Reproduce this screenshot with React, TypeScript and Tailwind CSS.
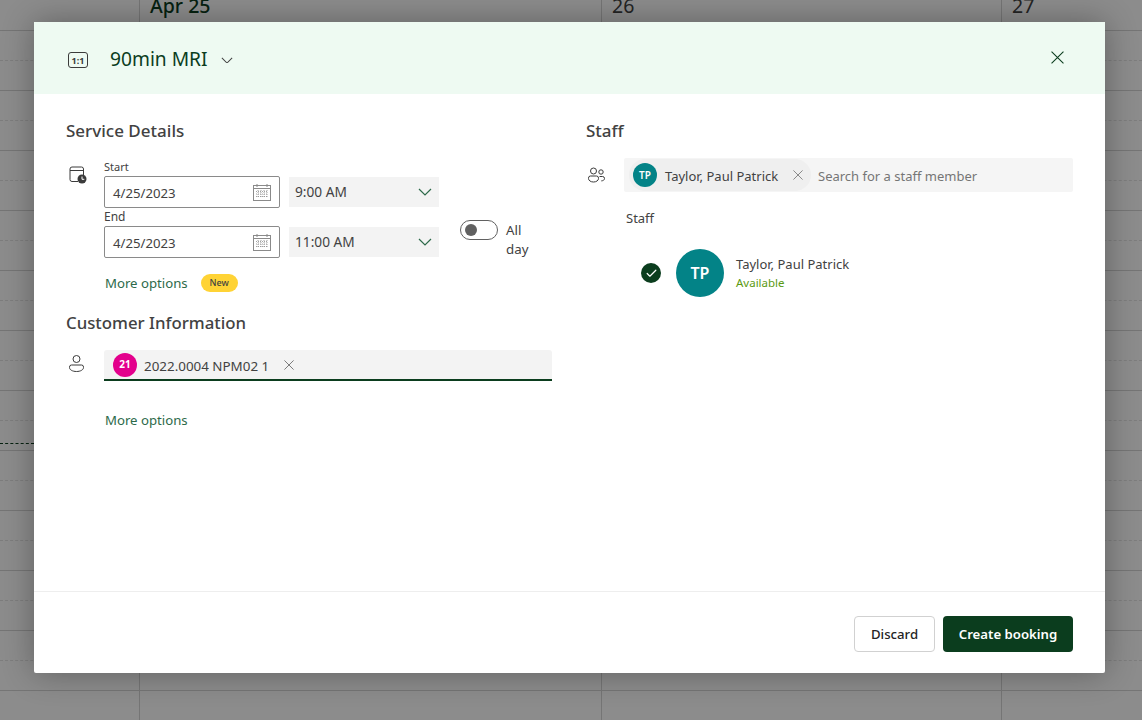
import { Check } from "lucide-react";

const font = "font-['Noto_Sans',sans-serif]";

function Dismiss({ size = 12, className = "" }: { size?: number; className?: string }) {
  return (
    <svg width={size} height={size} viewBox="0 0 12 12" fill="none" stroke="currentColor" strokeWidth="1" className={className}>
      <path d="M0.5 0.5 11.5 11.5M11.5 0.5 0.5 11.5" />
    </svg>
  );
}

function Chevron({ width = 14, className = "" }: { width?: number; className?: string }) {
  return (
    <svg width={width} height={(width * 8) / 14} viewBox="0 0 14 8" fill="none" stroke="currentColor" strokeWidth="1.2" className={className}>
      <path d="M1 1 7 7 13 1" />
    </svg>
  );
}

function CalendarIcon() {
  return (
    <svg width="18" height="17" viewBox="0 0 18 17" fill="none" stroke="#8a8a8a" strokeWidth="1">
      <rect x="0.5" y="1.5" width="17" height="15" />
      <path d="M0.5 4.5h17M4 0v3M14 0v3" />
      <path d="M3 7.5h12M3 10h12M3 12.5h12M5 6v8M8 6v8M11 6v8M14 6v8" strokeWidth="0.8" strokeDasharray="1 1" />
    </svg>
  );
}

function CalendarClock() {
  return (
    <svg width="18" height="18" viewBox="0 0 18 18" fill="none" className="text-[#3b3b3b]">
      <path d="M9 15.5H3a2 2 0 0 1-2-2V3a2 2 0 0 1 2-2h9.5a2 2 0 0 1 2 2v6" stroke="currentColor" strokeWidth="1" />
      <path d="M1 4.500h13.500" stroke="currentColor" strokeWidth="1" />
      <circle cx="13" cy="13" r="4.500" fill="currentColor" />
      <path d="M13 10.500V13.300H15.300" stroke="#fff" strokeWidth="1" />
    </svg>
  );
}

function PeopleIcon() {
  return (
    <svg width="17" height="16" viewBox="0 0 17 16" fill="none" stroke="#3b3b3b" strokeWidth="1">
      <circle cx="5.500" cy="4" r="3" />
      <circle cx="13" cy="5" r="2.200" />
      <path d="M2.500 9h6a2 2 0 0 1 2 2v.5c0 2-2.200 3.500-5 3.500s-5-1.500-5-3.500V11a2 2 0 0 1 2-2Z" />
      <path d="M11.500 9.500h3a2 2 0 0 1 2 2c0 1.400-1.300 2.300-3.200 2.400" />
    </svg>
  );
}

function PersonIcon() {
  return (
    <svg width="15" height="17" viewBox="0 0 15 17" fill="none" stroke="#3b3b3b" strokeWidth="1">
      <circle cx="7.500" cy="4" r="3.500" />
      <path d="M2.500 10h10a2 2 0 0 1 2 2v.5c0 2.300-3 4-7 4s-7-1.700-7-4V12a2 2 0 0 1 2-2Z" />
    </svg>
  );
}

function DateField({ value }: { value: string }) {
  return (
    <div className="w-[176px] h-8 border border-[#8a8a8a] rounded-[2px] flex items-center justify-between pl-2 pr-[8px] text-[13.2px] text-[#424242]">
      <span className="mt-[3px]">{value}</span>
      <CalendarIcon />
    </div>
  );
}

function TimeField({ value }: { value: string }) {
  return (
    <div className="w-[150px] h-[30px] ml-[9px] bg-[#f3f3f3] flex items-center justify-between pl-[6px] pr-[7px] text-[13.7px] text-[#424242]">
      <span>{value}</span>
      <Chevron className="text-[#2d6a4a]" />
    </div>
  );
}

function Row({ solid }: { solid: boolean }) {
  return <div className={solid ? "h-[30px] border-b border-[#d6d6d6]" : "h-[30px] border-b border-dashed border-[#e4e4e4]"} />;
}

export default function App() {
  const rows = Array.from({ length: 23 }, (_, i) => i);
  return (
    <div className={`${font} relative w-[1142px] h-[720px] overflow-hidden bg-white`}>
      {/* calendar behind the dialog */}
      <div className="grid grid-cols-[140px_462px_400px_140px] h-full">
        {["", "Apr 25", "26", "27"].map((day, c) => (
          <div key={c} className={c < 3 ? "border-r border-[#d6d6d6]" : ""}>
            <div className="h-[37px] -mt-[6px] border-b border-[#d6d6d6] pl-[10px] text-[19.5px] leading-[24px]">
              <span className={c === 1 ? "text-[#0b3d1e] font-medium" : "text-[#424242]"}>{day}</span>
            </div>
            {rows.map((r) => (
              <Row key={r} solid={r % 2 === 1} />
            ))}
          </div>
        ))}
      </div>
      <div className="absolute left-0 top-[443px] w-[34px] border-t border-dashed border-[#0b3d1e]" />

      {/* dim layer */}
      <div className="absolute inset-0 bg-black/45" />

      {/* dialog */}
      <div className="absolute left-[34px] top-[22px] w-[1071px] h-[651px] bg-white rounded-[2px] shadow-[0_0_32px_rgba(0,0,0,0.32)] flex flex-col">
        <header className="h-[72px] shrink-0 bg-[#eefaf2] flex items-center pl-[34px] pr-[41px]">
          <div className="mt-[4px] w-5 h-4 border border-[#3b3b3b] rounded-[3px] flex items-center justify-center text-[9px] font-bold leading-none text-[#3b3b3b]">1:1</div>
          <h1 className="ml-[22px] mt-[2px] text-[19.2px] leading-7 text-[#0b3d1e]">90min MRI</h1>
          <Chevron width={12} className="ml-[13px] mt-[4px] text-[#424242]" />
          <Dismiss size={13} className="ml-auto -mt-[1px] text-[#0b3d1e]" />
        </header>

        <div className="flex-1 flex px-8 gap-[34px] pt-6">
          <section className="w-[486px]">
            <h2 className="h-6 text-[17px] leading-[26px] font-medium text-[#424242]">Service Details</h2>
            <div className="flex mt-[16px]">
              <div className="w-[38px] pt-[8px] pl-[3px]">
                <CalendarClock />
              </div>
              <div>
                <div className="text-[11px] leading-4 mt-[1px] mb-[1px] text-[#424242]">Start</div>
                <div className="flex items-center">
                  <DateField value="4/25/2023" />
                  <TimeField value="9:00 AM" />
                </div>
                <div className="text-[12px] leading-[18px] text-[#424242]">End</div>
                <div className="flex items-center">
                  <DateField value="4/25/2023" />
                  <TimeField value="11:00 AM" />
                </div>
              </div>
              <div className="flex items-start ml-[21px] mt-[62px]">
                <div className="w-[38px] h-5 rounded-full border border-[#616161] flex items-center pl-[4px]">
                  <div className="w-[12px] h-[12px] rounded-full bg-[#616161]" />
                </div>
                <div className="ml-2 w-6 mt-[1px] text-[13.3px] leading-[19px] text-[#424242]">All day</div>
              </div>
            </div>
            <div className="flex items-center ml-[39px] mt-[14px] h-5">
              <span className="mt-[1px] text-[13.2px] text-[#2d6a4a]">More options</span>
              <span className="ml-[13px] w-[37px] h-[18px] rounded-full bg-[#ffd335] flex items-center justify-center text-[9px] font-medium text-[#424242]">New</span>
            </div>
            <h2 className="mt-[18px] h-6 text-[16.8px] leading-6 font-medium text-[#424242]">Customer Information</h2>
            <div className="flex mt-[15px]">
              <div className="w-[38px] pt-[5px] pl-[3px]">
                <PersonIcon />
              </div>
              <div className="flex-1 h-[31px] bg-[#f3f3f3] border-b-2 border-[#0b3d1e] rounded-t-[3px] flex items-center pl-[9px]">
                <span className="w-6 h-6 rounded-full bg-[#e3008c] text-white text-[10px] font-bold flex items-center justify-center">21</span>
                <span className="ml-[7px] mt-[4px] text-[13.4px] text-[#424242]">2022.0004 NPM02 1</span>
                <Dismiss size={10} className="ml-[15px] text-[#616161]" />
              </div>
            </div>
            <div className="ml-[39px] mt-[29px] text-[13.2px] leading-5 text-[#2d6a4a]">More options</div>
          </section>

          <section className="flex-1">
            <h2 className="h-6 text-[17px] leading-[26px] font-medium text-[#424242]">Staff</h2>
            <div className="flex mt-4">
              <div className="w-[38px] pt-[9px] pl-[2px]">
                <PeopleIcon />
              </div>
              <div className="flex-1 h-[34px] bg-[#f5f5f5] rounded-[2px] flex items-center pl-[5px]">
                <div className="w-[182px] h-[32px] rounded-full bg-[#efefef] flex items-center pl-[4px]">
                  <span className="w-6 h-6 rounded-full bg-[#038387] text-white text-[10px] font-semibold flex items-center justify-center">TP</span>
                  <span className="ml-2 mt-[4px] text-[13px] text-[#424242]">Taylor, Paul Patrick</span>
                  <Dismiss size={10} className="ml-auto mr-[8px] text-[#757575]" />
                </div>
                <span className="ml-[7px] mt-[3px] text-[13px] text-[#757575]">Search for a staff member</span>
              </div>
            </div>
            <div className="ml-10 mt-4 text-[13px] leading-5 text-[#424242]">Staff</div>
            <div className="flex items-center ml-[55px] mt-[21px]">
              <span className="w-5 h-5 rounded-full bg-[#0b3d1e] flex items-center justify-center">
                <Check size={13} strokeWidth={2.2} className="text-white" />
              </span>
              <span className="ml-[15px] w-12 h-12 rounded-full bg-[#038387] text-white text-base font-semibold flex items-center justify-center">TP</span>
              <div className="ml-3">
                <div className="text-[13px] leading-[18px] text-[#424242]">Taylor, Paul Patrick</div>
                <div className="text-[11.5px] leading-4 mt-[2px] text-[#5c9a12]">Available</div>
              </div>
            </div>
          </section>
        </div>

        <footer className="h-[82px] shrink-0 border-t border-[#eeeeee] flex items-start justify-end gap-2 pt-6 pr-8">
          <button className="w-[81px] h-9 pt-[2px] rounded-[4px] border border-[#d1d1d1] bg-white text-[13.2px] font-medium text-[#242424]">Discard</button>
          <button className="w-[130px] h-9 pt-[2px] rounded-[4px] bg-[#0b3d1e] text-[13.2px] font-semibold text-white">Create booking</button>
        </footer>
      </div>
    </div>
  );
}
